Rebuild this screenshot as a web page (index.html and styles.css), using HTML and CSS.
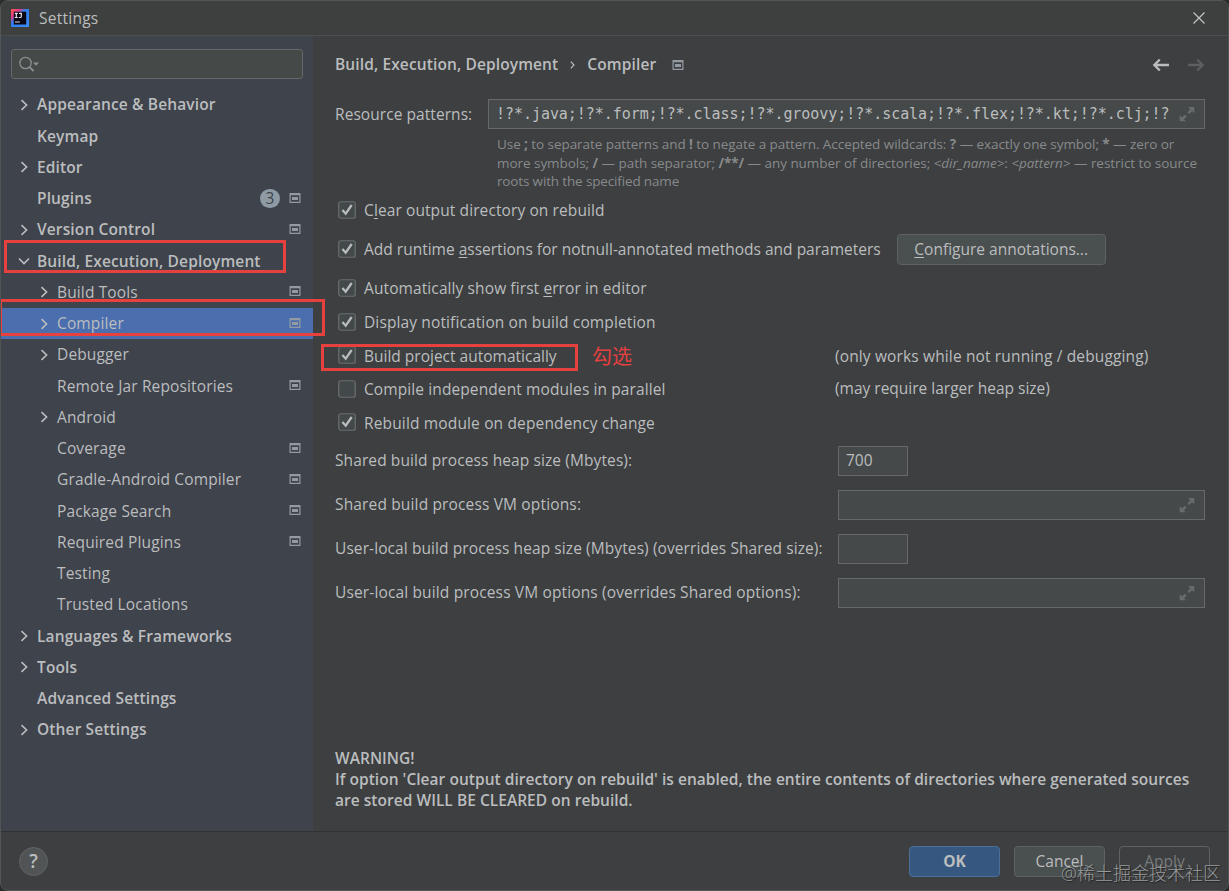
FILE: index.html
```html
<!DOCTYPE html>
<html lang="en">
<head>
<meta charset="utf-8">
<title>Settings</title>
<link rel="stylesheet" href="styles.css">
</head>
<body>
<svg class="defs" width="0" height="0">
  <symbol id="right" viewBox="0 0 16 16"><path d="M5.500 3.200 10.600 8l-5.100 4.800" fill="none" stroke="currentColor" stroke-width="1.600"/></symbol>
  <symbol id="down" viewBox="0 0 16 16"><path d="M3 5.500 8 10.600l5-5.100" fill="none" stroke="currentColor" stroke-width="1.600"/></symbol>
  <symbol id="proj" viewBox="0 0 12 12"><path d="M.5 1h11v10H.5zM1.700 3.200v6.600h8.600V3.200z" fill="currentColor" fill-rule="evenodd"/><path d="M3 5h6v3H3z" fill="currentColor"/></symbol>
  <symbol id="check" viewBox="0 0 18 18"><rect x=".75" y=".75" width="16.500" height="16.500" rx="2" fill="#43494a" stroke="#6b6e70" stroke-width="1.200"/><path d="M4.400 9 7.700 12.700 13.700 4" fill="none" stroke="#b9bcbd" stroke-width="2.300"/></symbol>
  <symbol id="empty" viewBox="0 0 18 18"><rect x=".75" y=".75" width="16.500" height="16.500" rx="2" fill="#43494a" stroke="#6b6e70" stroke-width="1.200"/></symbol>
  <symbol id="expand" viewBox="0 0 16 16"><path d="M9 1h6.300v6.300L13.200 5.200 10 8.100 8.400 6.500 11.200 3.200zM.7 9v6.300H7L4.900 13.200 7.700 10.400 6 8.700 2.900 11.200z" fill="currentColor"/></symbol>
  <symbol id="arrow" viewBox="0 0 18 14"><path d="M17 7H2.500M7.800 1.500 2.300 7l5.500 5.500" fill="none" stroke="currentColor" stroke-width="2.300"/></symbol>
</svg>
<div class="window">
  <header class="titlebar">
    <svg class="logo" viewBox="0 0 18 18">
      <defs><linearGradient id="lg" x1="0" y1="0" x2="1" y2="1"><stop offset="0" stop-color="#fc5a4c"/><stop offset=".25" stop-color="#e33a86"/><stop offset=".42" stop-color="#2f7df0"/><stop offset="1" stop-color="#3a8cf5"/></linearGradient></defs>
      <path d="M0 0h18v18H0z" fill="url(#lg)"/><path d="M2.800 2.800h12.400v12.600H2.800z" fill="#0b0614"/>
      <path d="M3.800 4.300h3M5.300 4.300v4.200M3.800 8.500h3M8 4.300h2.300v3.100q0 1.100-1.100 1.100H7.800M4 13h4.800" fill="none" stroke="#e8e4ea" stroke-width="1.200"/>
    </svg>
    <span class="title">Settings</span>
    <svg class="close" viewBox="0 0 12 12"><path d="M.5.5l11 11M11.500.5l-11 11" fill="none" stroke="#c3c5c6" stroke-width="1.200"/></svg>
  </header>
  <div class="body">
    <aside class="side">
      <div class="search"><svg viewBox="0 0 22 18"><circle cx="6.500" cy="7" r="5.700" fill="none" stroke="#8b9092" stroke-width="1.300"/><path d="M10.700 11.200 14.500 15" stroke="#8b9092" stroke-width="1.800"/><path d="M14 6.500h6l-3 3.200z" fill="#8b9092"/></svg></div>
      <nav class="tree">
        <div class="row top"><svg class="tw"><use href="#right"/></svg><span>Appearance &amp; Behavior</span></div>
        <div class="row top"><i class="tw"></i><span>Keymap</span></div>
        <div class="row top"><svg class="tw"><use href="#right"/></svg><span>Editor</span></div>
        <div class="row top"><i class="tw"></i><span>Plugins</span><b class="count">3</b><svg class="pj"><use href="#proj"/></svg></div>
        <div class="row top"><svg class="tw"><use href="#right"/></svg><span>Version Control</span><svg class="pj"><use href="#proj"/></svg></div>
        <div class="row top"><svg class="tw"><use href="#down"/></svg><span>Build, Execution, Deployment</span></div>
        <div class="row sub"><svg class="tw"><use href="#right"/></svg><span>Build Tools</span><svg class="pj"><use href="#proj"/></svg></div>
        <div class="row sub selected"><svg class="tw"><use href="#right"/></svg><span>Compiler</span><svg class="pj"><use href="#proj"/></svg></div>
        <div class="row sub"><svg class="tw"><use href="#right"/></svg><span>Debugger</span></div>
        <div class="row sub"><i class="tw"></i><span>Remote Jar Repositories</span><svg class="pj"><use href="#proj"/></svg></div>
        <div class="row sub"><svg class="tw"><use href="#right"/></svg><span>Android</span></div>
        <div class="row sub"><i class="tw"></i><span>Coverage</span><svg class="pj"><use href="#proj"/></svg></div>
        <div class="row sub"><i class="tw"></i><span>Gradle-Android Compiler</span><svg class="pj"><use href="#proj"/></svg></div>
        <div class="row sub"><i class="tw"></i><span>Package Search</span><svg class="pj"><use href="#proj"/></svg></div>
        <div class="row sub"><i class="tw"></i><span>Required Plugins</span><svg class="pj"><use href="#proj"/></svg></div>
        <div class="row sub"><i class="tw"></i><span>Testing</span></div>
        <div class="row sub"><i class="tw"></i><span>Trusted Locations</span></div>
        <div class="row top"><svg class="tw"><use href="#right"/></svg><span>Languages &amp; Frameworks</span></div>
        <div class="row top"><svg class="tw"><use href="#right"/></svg><span>Tools</span></div>
        <div class="row top"><i class="tw"></i><span>Advanced Settings</span></div>
        <div class="row top"><svg class="tw"><use href="#right"/></svg><span>Other Settings</span></div>
      </nav>
    </aside>
    <main class="main">
      <div class="crumbs">
        <span>Build, Execution, Deployment</span><svg class="sep" viewBox="0 0 5 8"><path d="M.8.6 4 4 .8 7.400" fill="none" stroke="#bbb" stroke-width="1.200"/></svg><span>Compiler</span><svg class="pj"><use href="#proj"/></svg>
        <svg class="back"><use href="#arrow"/></svg><svg class="forward"><use href="#arrow"/></svg>
      </div>
      <div class="patterns"><label>Resource patterns:</label>
        <div class="field mono"><span>!?*.java;!?*.form;!?*.class;!?*.groovy;!?*.scala;!?*.flex;!?*.kt;!?*.clj;!?</span><svg class="ex"><use href="#expand"/></svg></div>
      </div>
      <div class="hint">
        <p class="h1">Use <b>;</b> to separate patterns and <b>!</b> to negate a pattern. Accepted wildcards: <b>?</b> — exactly one symbol; <b>*</b> — zero or</p>
        <p class="h2">more symbols; <b>/</b> — path separator; <b>/**/</b> — any number of directories; <i>&lt;dir_name&gt;</i>: <i>&lt;pattern&gt;</i> — restrict to source</p>
        <p class="h3">roots with the specified name</p>
      </div>
      <div class="opts">
        <div class="opt o1"><svg class="cb"><use href="#check"/></svg><span>C<u>l</u>ear output directory on rebuild</span></div>
        <div class="opt o2"><svg class="cb"><use href="#check"/></svg><span>Add runtime <u>a</u>ssertions for notnull-annotated methods and parameters</span><button class="btn conf"><u>C</u>onfigure annotations...</button></div>
        <div class="opt o3"><svg class="cb"><use href="#check"/></svg><span>Automatically show first <u>e</u>rror in editor</span></div>
        <div class="opt o4"><svg class="cb"><use href="#check"/></svg><span>Display notification on build completion</span></div>
        <div class="opt o5"><svg class="cb"><use href="#check"/></svg><span>Build project automatically</span><em class="note">(only works while not running / debugging)</em></div>
        <div class="opt o6"><svg class="cb"><use href="#empty"/></svg><span>Compile independent modules in parallel</span><em class="note">(may require larger heap size)</em></div>
        <div class="opt o7"><svg class="cb"><use href="#check"/></svg><span>Rebuild module on dependency change</span></div>
      </div>
      <div class="form">
        <label class="f1">Shared build process heap size (Mbytes):</label><div class="field small">700</div>
        <label class="f2">Shared build process VM options:</label><div class="field"><svg class="ex"><use href="#expand"/></svg></div>
        <label class="f3">User-local build process heap size (Mbytes) (overrides Shared size):</label><div class="field small"></div>
        <label class="f4">User-local build process VM options (overrides Shared options):</label><div class="field"><svg class="ex"><use href="#expand"/></svg></div>
      </div>
      <div class="warning"><p>WARNING!</p><p>If option 'Clear output directory on rebuild' is enabled, the entire contents of directories where generated sources</p><p>are stored WILL BE CLEARED on rebuild.</p></div>
    </main>
  </div>
  <footer class="foot">
    <span class="help">?</span>
    <button class="btn ok">OK</button><button class="btn">Cancel</button><button class="btn apply">Apply</button>
  </footer>
  <div class="mark m1"></div><div class="mark m2"></div><div class="mark m3"></div>
  <div class="marktext">勾选</div>
  <div class="watermark">@稀土掘金技术社区</div>
</div>
</body>
</html>
```
FILE: styles.css
```css
* { box-sizing: border-box; margin: 0; padding: 0; }
body { width: 1229px; height: 891px; overflow: hidden; background: #2b2c2c; color: #bbbdbe; font: 15.5px/21px "Open Sans", "Noto Sans", sans-serif; white-space: nowrap; }
.defs { position: absolute; }
svg { display: block; flex: none; }
.window { position: relative; width: 1229px; height: 891px; background: #3d3f41; border: 1px solid #515556; border-radius: 8px; display: flex; flex-direction: column; overflow: hidden; }
.titlebar { height: 35px; background: #3e403f; border-bottom: 1px solid #4b4e50; display: flex; align-items: center; padding: 0 23px 0 10px; }
.logo { width: 18px; height: 18px; }
.title { margin-left: 10px; letter-spacing: .25px; }
.close { width: 12px; height: 12px; margin-left: auto; }
.body { height: 796px; display: flex; border-bottom: 1px solid #303233; }
.side { width: 312px; background: #3f434c; padding-top: 13px; }
.search { width: 292px; height: 30px; margin-left: 10px; border: 1px solid #64696a; border-radius: 3px; background: #454948; padding: 6px 7px; }
.search svg { width: 22px; height: 18px; }
.tree { margin-top: 10.3px; }
.row { height: 31.25px; display: flex; align-items: center; padding: 0 12px 0 15px; }
.row.sub { padding-left: 35px; letter-spacing: .14px; }
.tw { width: 16px; height: 16px; margin-right: 5px; flex: none; }
.top { font-weight: 600; letter-spacing: .13px; }
.selected { background: #4b6eaf; }
.pj { width: 12px; height: 12px; margin-left: auto; color: #949aa1; }
.row .pj { margin-bottom: 2px; }
.count { width: 20px; height: 19px; margin-left: auto; border-radius: 10px; background: #8e9ba4; color: #3f434c; font-weight: 400; text-align: center; line-height: 19px; }
.count + .pj { margin-left: 9px; }
.main { flex: 1; padding: 12px 23px 0 22px; display: flex; flex-direction: column; }
.crumbs { height: 33px; display: flex; align-items: center; font-weight: 600; letter-spacing: .12px; }
.sep { width: 5px; height: 8px; margin: 0 12px; }
.crumbs .pj { margin-left: 16px; }
.back { width: 18px; height: 14px; margin-left: auto; color: #babcbd; }
.forward { width: 18px; height: 14px; margin-left: 17px; color: #5d6062; transform: scaleX(-1); }
.patterns { display: flex; align-items: center; justify-content: space-between; margin-top: 18px; }
.patterns label { letter-spacing: .06px; }
.field { height: 30px; width: 367px; background: #454949; border: 1px solid #65696a; display: flex; align-items: center; justify-content: flex-end; padding: 0 9px 0 7px; }
.patterns .field { width: 717px; justify-content: space-between; }
.field.small { width: 70px; justify-content: flex-start; }
.mono { font-family: "DejaVu Sans Mono", "Liberation Mono", monospace; font-size: 15px; letter-spacing: -.05px; }
.ex { width: 16px; height: 16px; color: #666b6c; }
.hint { color: #888a8b; font-size: 13.5px; line-height: 18.5px; margin: 6px 0 0 162px; }
.h1 { letter-spacing: -.065px; }
.h2 { letter-spacing: -.045px; }
.h3 { letter-spacing: -.15px; }
.opts { margin-top: 3px; }
.opt { height: 34px; display: flex; align-items: center; padding-left: 3px; position: relative; letter-spacing: .1px; }
.o2 { height: 44px; letter-spacing: 0; }
.o4 { letter-spacing: .12px; }
.o5, .o6, .o7 { height: 33.5px; }
.o5 > span { letter-spacing: 0; }
.o5 .note { letter-spacing: .14px; }
.o6 .note { letter-spacing: 0; margin-bottom: 2px; }
.o7 { letter-spacing: .15px; }
.cb { width: 18px; height: 18px; margin-right: 8px; margin-bottom: 2px; }
u { text-underline-offset: 2px; }
.note { position: absolute; left: 500px; font-style: normal; }
.btn { height: 31px; border: 1px solid #5d6263; border-radius: 4px; background: #4a4f50; color: inherit; font: inherit; width: 91px; }
.conf { width: 209px; margin-left: 16px; }
.form { margin-top: 5.5px; display: grid; grid-template-columns: 503px 367px; row-gap: 14px; align-items: center; }
.f1 { letter-spacing: .1px; }
.f2 { letter-spacing: .15px; }
.f3 { letter-spacing: .09px; }
.f4 { letter-spacing: .14px; }
.warning { font-weight: 600; letter-spacing: .035px; margin-top: auto; margin-bottom: 20px; }
.foot { flex: 1; display: flex; align-items: center; gap: 14px; padding: 1px 18px 0; }
.help { width: 29px; height: 29px; border: 1px solid #606466; border-radius: 50%; background: #505455; text-align: center; font-weight: 600; font-size: 19px; line-height: 27px; margin-right: auto; }
.ok { background: #365880; border-color: #4a709a; font-weight: 700; }
.apply { background: transparent; color: #777a7b; }
.mark { position: absolute; border: 3px solid #e6403f; }
.m1 { left: 3px; top: 239px; width: 282px; height: 33px; }
.m2 { left: -2px; top: 298px; width: 326px; height: 37px; }
.m3 { left: 320px; top: 343px; width: 257px; height: 27px; }
.marktext { position: absolute; left: 591px; top: 342px; font: 20px/26px "Noto Sans CJK SC", sans-serif; color: #e6403f; }
.watermark { position: absolute; left: 1060px; top: 860px; font: 18px/24px "Open Sans", "Noto Sans CJK SC", sans-serif; font-weight: 300; color: #97999a; text-shadow: 1px 1px 1px #222; }
```
